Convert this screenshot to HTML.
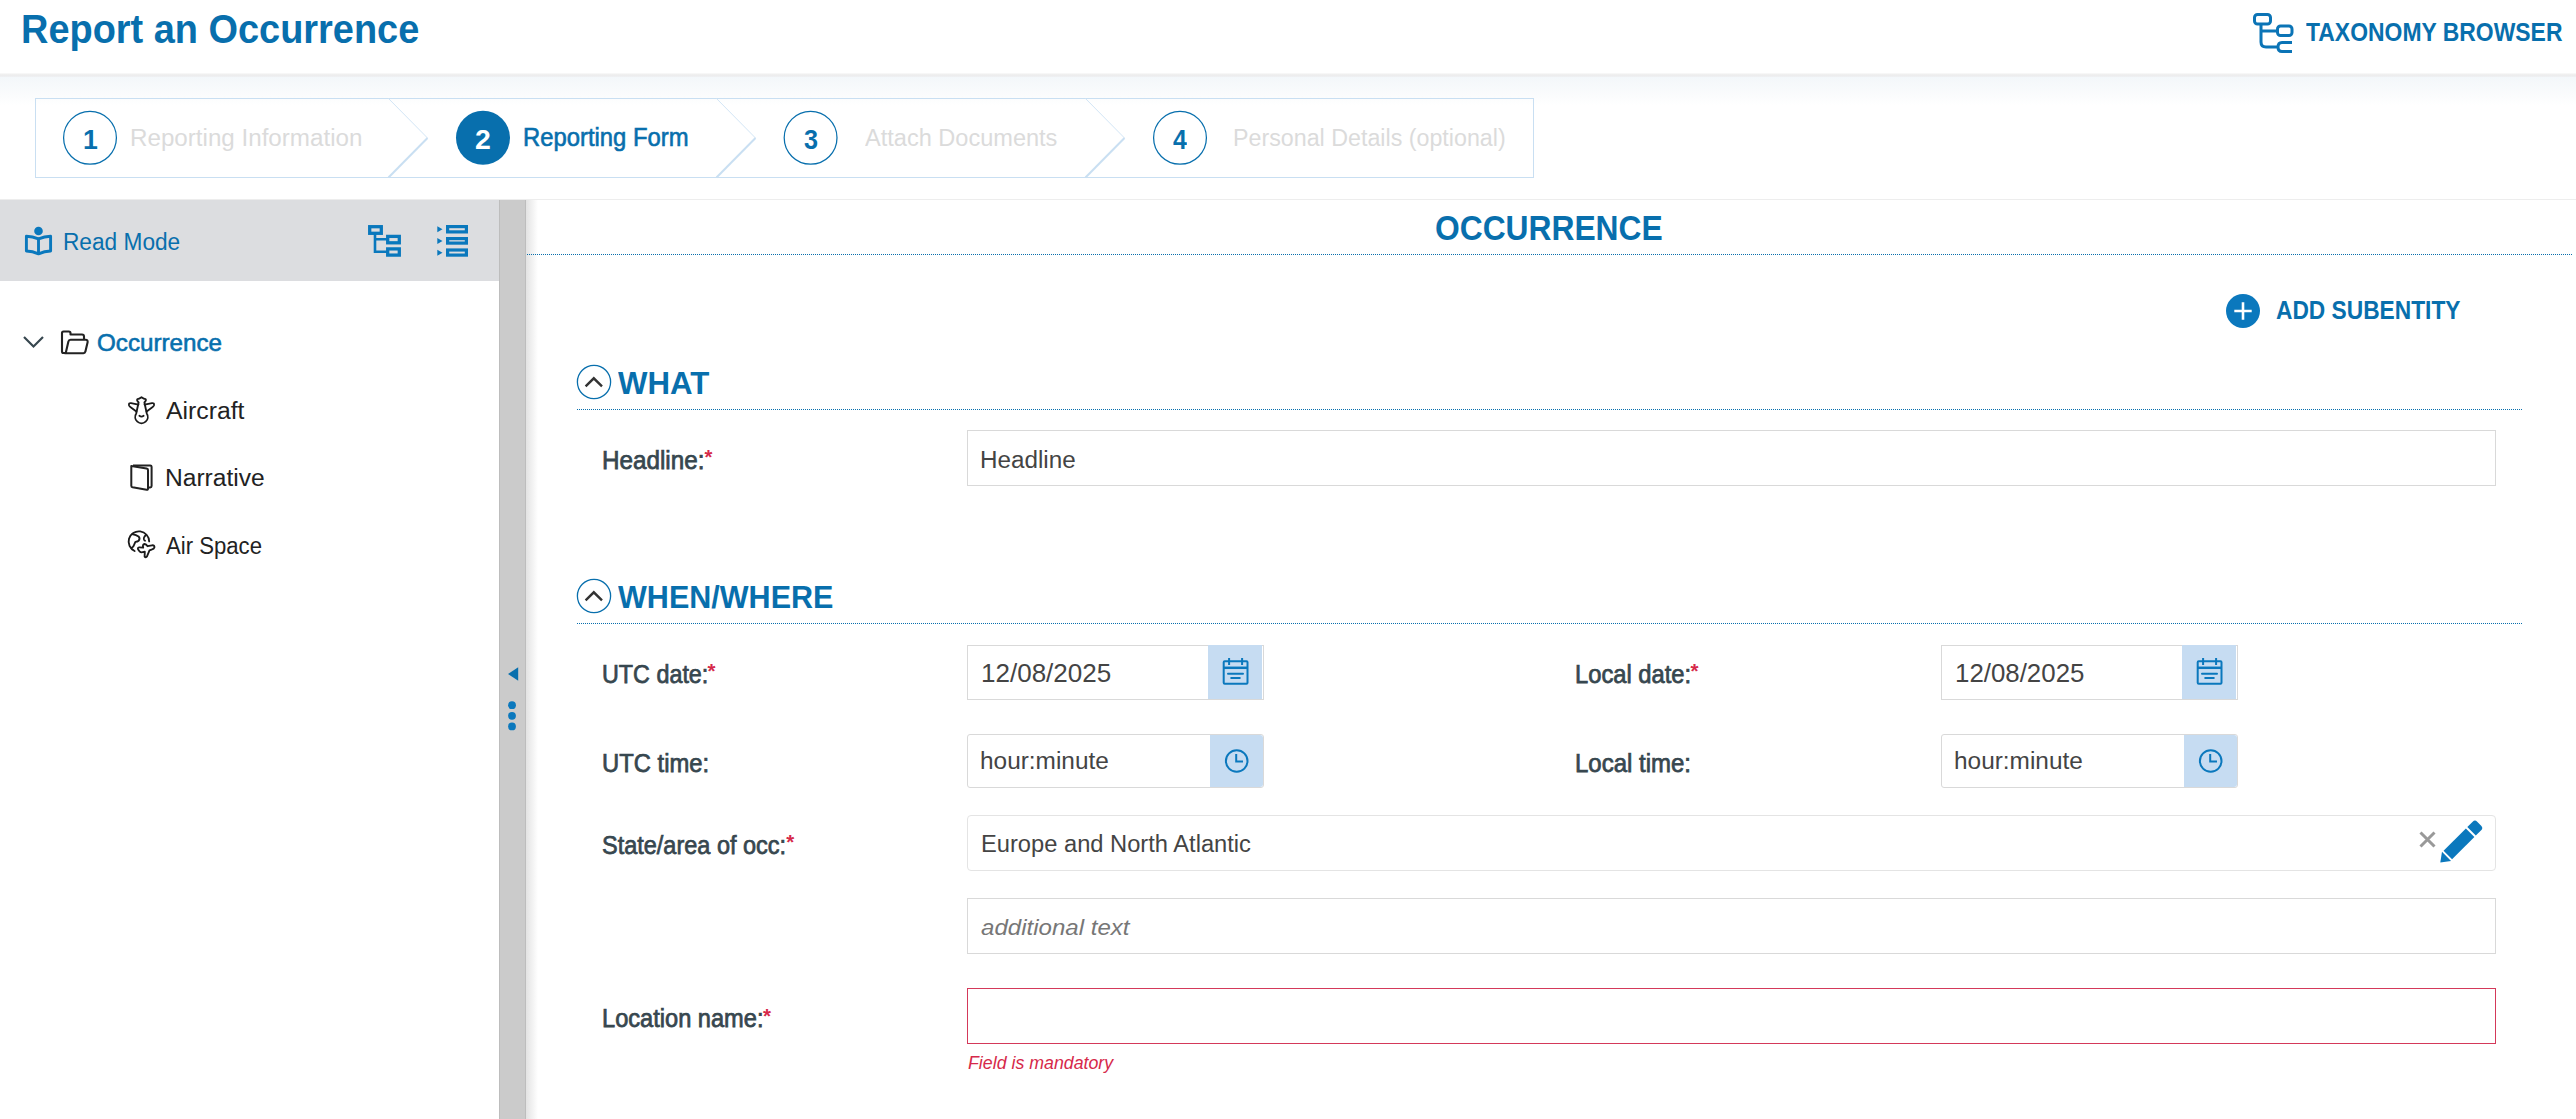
<!DOCTYPE html>
<html><head><meta charset="utf-8">
<style>
html,body{margin:0;padding:0;background:#fff;}
body{width:2576px;height:1119px;position:relative;overflow:hidden;font-family:"Liberation Sans",sans-serif;}
.a{position:absolute;box-sizing:border-box;}
.tx{position:absolute;white-space:nowrap;line-height:1;transform-origin:0 0;}
.dot{position:absolute;height:1px;background:repeating-linear-gradient(to right,#086fad 0 1px,transparent 1px 2px);}
.inp{position:absolute;box-sizing:border-box;border:1px solid #d9d9d9;background:#fff;}
.btn{position:absolute;background:#c6dcf2;}
svg{position:absolute;left:0;top:0;overflow:visible;}
</style></head>
<body>
<!-- header shadow -->
<div class="a" style="left:0;top:73px;width:2576px;height:4px;background:linear-gradient(#fbfbfb,#ececec 50%,#eff1f3)"></div>
<div class="a" style="left:0;top:77px;width:2576px;height:28px;background:linear-gradient(#f3f7fa,#fbfcfd 70%,#ffffff)"></div>

<!-- stepper -->
<div class="a" style="left:35px;top:98px;width:1499px;height:80px;border:1px solid #c9dff2;background:transparent"></div>

<!-- gray line -->
<div class="a" style="left:0;top:199px;width:2576px;height:1px;background:#ededed"></div>
<!-- sidebar -->
<div class="a" style="left:0;top:200px;width:499px;height:81px;background:#dcdde0"></div>
<!-- splitter -->
<div class="a" style="left:499px;top:200px;width:27px;height:919px;background:#cbcbcb;border-left:1px solid #bdbdbd;border-right:1px solid #bdbdbd"></div>
<div class="a" style="left:526px;top:200px;width:12px;height:919px;background:linear-gradient(to right,#e3e3e3,#ffffff)"></div>

<!-- dotted lines -->
<div class="dot" style="left:527px;top:254px;width:2045px"></div>
<div class="dot" style="left:577px;top:409px;width:1945px"></div>
<div class="dot" style="left:577px;top:623px;width:1945px"></div>

<!-- inputs -->
<div class="inp" style="left:967px;top:430px;width:1529px;height:56px"></div>
<div class="inp" style="left:967px;top:645px;width:297px;height:55px"></div>
<div class="btn" style="left:1208px;top:645px;width:54px;height:54px"></div>
<div class="inp" style="left:967px;top:734px;width:297px;height:54px;border-radius:3px"></div>
<div class="btn" style="left:1210px;top:735px;width:53px;height:52px;border-radius:0 3px 3px 0"></div>
<div class="inp" style="left:1941px;top:645px;width:297px;height:55px"></div>
<div class="btn" style="left:2182px;top:645px;width:54px;height:54px"></div>
<div class="inp" style="left:1941px;top:734px;width:297px;height:54px;border-radius:3px"></div>
<div class="btn" style="left:2184px;top:735px;width:53px;height:52px;border-radius:0 3px 3px 0"></div>
<div class="inp" style="left:967px;top:815px;width:1529px;height:56px;border-color:#e4e4e4;border-radius:4px"></div>
<div class="inp" style="left:967px;top:898px;width:1529px;height:56px"></div>
<div class="inp" style="left:967px;top:988px;width:1529px;height:56px;border-color:#d4395a"></div>

<svg width="2576" height="1119" viewBox="0 0 2576 1119">
 <!-- taxonomy icon -->
 <g fill="none" stroke="#0b74b6" stroke-width="3">
  <rect x="2254.5" y="14.5" width="16" height="9.5" rx="3"/>
  <path d="M2261 24 V42 Q2261 47 2266 47 H2278"/>
  <path d="M2261 31 H2278"/>
  <rect x="2277.5" y="26" width="14.5" height="9.5" rx="3"/>
  <path d="M2292 42.5 H2282 Q2278 42.5 2278 47 Q2278 51.5 2282 51.5 H2292"/>
 </g>
 <!-- chevrons -->
 <g fill="none" stroke="#c9dff2">
  <path d="M388.5 98.5 L427.5 138" stroke-width="1" stroke="#d3e6f6"/><path d="M427.5 138 L388.5 177.5" stroke-width="2"/>
  <path d="M716.5 98.5 L755.5 138" stroke-width="1" stroke="#d3e6f6"/><path d="M755.5 138 L716.5 177.5" stroke-width="2"/>
  <path d="M1085.5 98.5 L1124.5 138" stroke-width="1" stroke="#d3e6f6"/><path d="M1124.5 138 L1085.5 177.5" stroke-width="2"/>
 </g>
 <!-- step circles -->
 <circle cx="90" cy="137.8" r="26.4" fill="none" stroke="#086fad" stroke-width="1.25"/>
 <circle cx="483" cy="137.8" r="27" fill="#086fad"/>
 <circle cx="810.6" cy="137.8" r="26.4" fill="none" stroke="#086fad" stroke-width="1.25"/>
 <circle cx="1180" cy="137.8" r="26.4" fill="none" stroke="#086fad" stroke-width="1.25"/>

 <!-- read mode book -->
 <g fill="none" stroke="#0a78bd" stroke-width="2.9" stroke-linejoin="round">
  <path d="M26.4 236.2 Q32.5 236.3 38.5 238.9 Q44.5 236.3 50.6 236.2 V251 Q44.5 251.2 38.5 253.9 Q32.5 251.2 26.4 251 Z"/>
  <path d="M38.5 239 V253.8"/>
 </g>
 <circle cx="38.5" cy="231" r="4.3" fill="#0a78bd"/>
 <!-- tree icon -->
 <g fill="none" stroke="#0a78bd" stroke-width="3.3">
  <rect x="369.7" y="226.7" width="11.6" height="6.6"/>
  <rect x="387.7" y="236.4" width="11.6" height="6.4"/>
  <rect x="387.7" y="248.9" width="11.6" height="6.2"/>
 </g>
 <path d="M375 234 V251.8 H387 M375 239.2 H387" fill="none" stroke="#0a78bd" stroke-width="2.6"/>
 <!-- list icon -->
 <g fill="none" stroke="#0a78bd" stroke-width="3.2">
  <rect x="447.6" y="226.6" width="18.8" height="5.3"/>
  <rect x="447.6" y="238.6" width="18.8" height="4.5"/>
  <rect x="447.6" y="250" width="18.8" height="5.1"/>
 </g>
 <g fill="#0a78bd">
  <path d="M437.3 226.3 L442.5 229.3 L437.3 232.3 Z"/>
  <path d="M437.3 238 L442.5 241 L437.3 244 Z"/>
  <path d="M437.3 249.7 L442.5 252.7 L437.3 255.7 Z"/>
 </g>

 <!-- tree chevron + folder -->
 <path d="M24 337 L33.5 346.5 L43 337" fill="none" stroke="#37474f" stroke-width="2.2"/>
 <g fill="none" stroke="#222" stroke-width="2.1" stroke-linejoin="round">
  <path d="M65.5 353 H63.5 Q62 353 62 351.5 V333 Q62 331.5 63.5 331.5 H68.8 Q70.5 331.5 70.5 333.2 V334.5 H82 Q84 334.5 84 336.5 V339.5"/>
  <path d="M64.5 353.2 H83.5 Q85 353.2 85.4 351.6 L87.6 342.3 Q88 339.8 85.6 339.8 H70.5 Q68.8 339.8 68.4 341.5 L65.8 352.8"/>
 </g>
 <!-- aircraft icon -->
 <g fill="none" stroke="#1a1a1a" stroke-width="1.85" stroke-linejoin="round" stroke-linecap="round">
  <path d="M138.6 402.5 L136.2 413.5 A6.3 6.3 0 1 0 146.8 413.5 L144.4 402.5 Q146.6 400.2 145.6 399.2 Q144 398.9 141.5 397.2 Q139 398.9 137.4 399.2 Q136.4 400.2 138.6 402.5"/>
  <path d="M138.4 404.6 L131 403.1 Q128.6 402.8 129 405.2 Q129.5 406.6 131 407.6 L136.4 411.6"/>
  <path d="M144.6 404.6 L152 403.1 Q154.4 402.8 154 405.2 Q153.5 406.6 152 407.6 L146.6 411.6"/>
  <path d="M139.4 415.8 Q141.5 417.4 143.6 415.8"/>
 </g>
 <!-- narrative icon -->
 <g fill="none" stroke="#222" stroke-width="2" stroke-linejoin="round">
  <path d="M131.3 466 L146.6 468.5 Q148 468.8 148 470 V488.7 Q148 490 146.6 489.7 L132.6 487.3 Q131.3 487 131.3 485.7 Z"/>
  <path d="M133 465.4 H150.2 Q151.6 465.4 151.6 466.8 V486 Q151.6 487.4 150.2 487.4 H148"/>
 </g>
 <!-- airspace icon -->
 <g fill="none" stroke="#1a1a1a" stroke-width="1.85" stroke-linecap="round" stroke-linejoin="round">
  <path d="M134.6 551 A10.3 10.3 0 1 1 149.2 541.4"/>
  <path d="M132.2 534.2 Q136.5 535 138.5 536.4 Q140.5 538.5 138.6 540.8 Q137.5 541.8 135.4 541.9 Q134.2 544.5 133.6 546 Q132.6 547.6 131.4 547.8"/>
  <path d="M145.9 534.9 Q143.3 537.5 144 539.5 Q144.4 540.5 145 540.7"/>
  <path d="M138 549.2 Q137.6 547.4 139.4 547.3 L143.2 547.6 Q142.2 544.2 144.6 544 Q146.2 544.2 147.6 546.2 L152 545.3 Q154.8 545 154.4 547.6 Q154 549.1 151.6 549.6 L149.5 550.4 L147 556.4 Q145.8 558 144.6 556.6 L144.8 551.6 L141.6 552.3 Q139.6 552.4 138 549.2 Z"/>
 </g>

 <!-- splitter arrows -->
 <path d="M508 674 L518.2 667.3 L518.2 680.8 Z" fill="#086fad"/>
 <circle cx="512" cy="705.2" r="3.9" fill="#0b78bd"/>
 <circle cx="512" cy="715.8" r="3.9" fill="#0b78bd"/>
 <circle cx="512" cy="726.4" r="3.9" fill="#0b78bd"/>

 <!-- add subentity -->
 <circle cx="2243" cy="311" r="17" fill="#0b78bd"/>
 <path d="M2234.3 311 H2251.7 M2243 302.3 V319.7" stroke="#fff" stroke-width="2.6"/>

 <!-- section toggles -->
 <circle cx="594" cy="382" r="16.6" fill="none" stroke="#086fad" stroke-width="1.3"/>
 <path d="M585.6 386.3 L593.8 378.3 L602 386.3" fill="none" stroke="#333" stroke-width="2.4"/>
 <circle cx="594" cy="596" r="16.6" fill="none" stroke="#086fad" stroke-width="1.3"/>
 <path d="M585.6 600.3 L593.8 592.3 L602 600.3" fill="none" stroke="#333" stroke-width="2.4"/>

 <!-- calendars -->
 <g id="cal" fill="none" stroke="#0b78bd" stroke-width="2">
  <rect x="1223.7" y="661.2" width="23.8" height="22.6" rx="1"/>
  <path d="M1223.7 667.8 H1247.5" stroke-width="2.5"/>
  <path d="M1229.1 658 V665 M1242.1 658 V665"/>
  <path d="M1228 673.8 H1243 M1231.2 678 H1239.8" stroke-linecap="round"/>
 </g>
 <use href="#cal" x="974" y="0"/>
 <!-- clocks -->
 <g id="clk" fill="none" stroke="#0b78bd" stroke-width="2">
  <circle cx="1236.7" cy="761" r="10.8"/>
  <path d="M1236.2 754 V761.5 H1243"/>
 </g>
 <use href="#clk" x="974" y="0"/>

 <!-- x and pencil -->
 <path d="M2420.5 832.5 L2434.5 846.5 M2434.5 832.5 L2420.5 846.5" stroke="#999" stroke-width="3"/>
 <g transform="translate(2440.3 862.6) rotate(-45)" fill="#0b78bd">
  <path d="M0 0 L8.8 -6.4 L8.8 6.4 Z"/>
  <rect x="10.6" y="-6" width="31.6" height="12"/>
  <path d="M44.2 -6 H51.8 Q55 -6 55 -2.8 V2.8 Q55 6 51.8 6 H44.2 Z"/>
 </g>
</svg>

<div class="tx" style="left:20.63px;top:9.09px;font-size:41.24px;font-weight:bold;color:#086fad;transform:scaleX(0.9195)">Report an Occurrence</div>
<div class="tx" style="left:2306.30px;top:20.33px;font-size:25.60px;font-weight:bold;color:#086fad;transform:scaleX(0.8958)">TAXONOMY BROWSER</div>
<div class="tx" style="left:82.63px;top:127.13px;font-size:27.02px;font-weight:bold;color:#086fad;transform:scaleX(0.9868)">1</div>
<div class="tx" style="left:129.91px;top:125.53px;font-size:24.18px;color:#dbdbdb;transform:scaleX(0.9998)">Reporting Information</div>
<div class="tx" style="left:474.91px;top:127.35px;font-size:26.88px;font-weight:bold;color:#ffffff;transform:scaleX(1.0565)">2</div>
<div class="tx" style="left:523.44px;top:124.59px;font-size:25.17px;-webkit-text-stroke:0.6px #086fad;color:#086fad;transform:scaleX(0.9469)">Reporting Form</div>
<div class="tx" style="left:803.81px;top:127.35px;font-size:26.88px;font-weight:bold;color:#086fad;transform:scaleX(0.9380)">3</div>
<div class="tx" style="left:865.30px;top:125.53px;font-size:24.18px;color:#dbdbdb;transform:scaleX(0.9742)">Attach Documents</div>
<div class="tx" style="left:1173.00px;top:127.35px;font-size:26.88px;font-weight:bold;color:#086fad;transform:scaleX(0.9259)">4</div>
<div class="tx" style="left:1232.78px;top:125.53px;font-size:24.18px;color:#dbdbdb;transform:scaleX(0.9618)">Personal Details (optional)</div>
<div class="tx" style="left:62.83px;top:229.77px;font-size:23.89px;color:#086fad;transform:scaleX(0.9495)">Read Mode</div>
<div class="tx" style="left:97.27px;top:330.75px;font-size:24.75px;-webkit-text-stroke:0.6px #086fad;color:#086fad;transform:scaleX(0.9766)">Occurrence</div>
<div class="tx" style="left:166.30px;top:400.04px;font-size:23.47px;color:#222222;transform:scaleX(1.0551)">Aircraft</div>
<div class="tx" style="left:165.08px;top:466.92px;font-size:23.61px;color:#222222;transform:scaleX(1.0412)">Narrative</div>
<div class="tx" style="left:166.30px;top:533.55px;font-size:24.75px;color:#222222;transform:scaleX(0.8948)">Air Space</div>
<div class="tx" style="left:1435.11px;top:209.94px;font-size:35.27px;font-weight:bold;color:#086fad;transform:scaleX(0.9009)">OCCURRENCE</div>
<div class="tx" style="left:2276.24px;top:297.55px;font-size:25.46px;font-weight:bold;color:#086fad;transform:scaleX(0.8935)">ADD SUBENTITY</div>
<div class="tx" style="left:617.80px;top:368.29px;font-size:31.43px;font-weight:bold;color:#086fad;transform:scaleX(0.9936)">WHAT</div>
<div class="tx" style="left:602.01px;top:448.45px;font-size:25.46px;-webkit-text-stroke:0.75px #37474f;color:#37474f;transform:scaleX(0.9518)">Headline:</div>
<div class="tx" style="left:980.31px;top:447.67px;font-size:23.89px;color:#444444;transform:scaleX(1.0144)">Headline</div>
<div class="tx" style="left:617.80px;top:581.63px;font-size:31.15px;font-weight:bold;color:#086fad;transform:scaleX(0.9807)">WHEN/WHERE</div>
<div class="tx" style="left:601.64px;top:662.21px;font-size:25.74px;-webkit-text-stroke:0.75px #37474f;color:#37474f;transform:scaleX(0.9067)">UTC date:</div>
<div class="tx" style="left:980.67px;top:661.19px;font-size:25.17px;color:#444444;transform:scaleX(1.0341)">12/08/2025</div>
<div class="tx" style="left:1574.94px;top:662.21px;font-size:25.74px;-webkit-text-stroke:0.75px #37474f;color:#37474f;transform:scaleX(0.9226)">Local date:</div>
<div class="tx" style="left:1954.58px;top:661.19px;font-size:25.17px;color:#444444;transform:scaleX(1.0276)">12/08/2025</div>
<div class="tx" style="left:601.51px;top:751.21px;font-size:25.74px;-webkit-text-stroke:0.75px #37474f;color:#37474f;transform:scaleX(0.9249)">UTC time:</div>
<div class="tx" style="left:980.47px;top:749.72px;font-size:23.01px;color:#444444;transform:scaleX(1.0608)">hour:minute</div>
<div class="tx" style="left:1575.13px;top:751.21px;font-size:25.74px;-webkit-text-stroke:0.75px #37474f;color:#37474f;transform:scaleX(0.9323)">Local time:</div>
<div class="tx" style="left:1954.47px;top:749.72px;font-size:23.01px;color:#444444;transform:scaleX(1.0608)">hour:minute</div>
<div class="tx" style="left:602.27px;top:831.63px;font-size:26.31px;-webkit-text-stroke:0.75px #37474f;color:#37474f;transform:scaleX(0.8930)">State/area of occ:</div>
<div class="tx" style="left:980.85px;top:831.75px;font-size:24.75px;color:#444444;transform:scaleX(0.9571)">Europe and North Atlantic</div>
<div class="tx" style="left:981.42px;top:916.03px;font-size:22.88px;font-style:italic;color:#777777;transform:scaleX(1.0522)">additional text</div>
<div class="tx" style="left:601.75px;top:1006.41px;font-size:25.03px;-webkit-text-stroke:0.75px #37474f;color:#37474f;transform:scaleX(0.9440)">Location name:</div>
<div class="tx" style="left:968.02px;top:1054.40px;font-size:18.13px;font-style:italic;color:#d6294a;transform:scaleX(0.9812)">Field is mandatory</div>
<div class="tx" style="left:704.40px;top:447.10px;font-size:20.22px;font-weight:bold;color:#d6294a">*</div>
<div class="tx" style="left:707.50px;top:661.06px;font-size:20.48px;font-weight:bold;color:#d6294a">*</div>
<div class="tx" style="left:1690.50px;top:661.06px;font-size:20.48px;font-weight:bold;color:#d6294a">*</div>
<div class="tx" style="left:786.30px;top:832.06px;font-size:20.48px;font-weight:bold;color:#d6294a">*</div>
<div class="tx" style="left:762.90px;top:1006.06px;font-size:20.48px;font-weight:bold;color:#d6294a">*</div>
</body></html>
